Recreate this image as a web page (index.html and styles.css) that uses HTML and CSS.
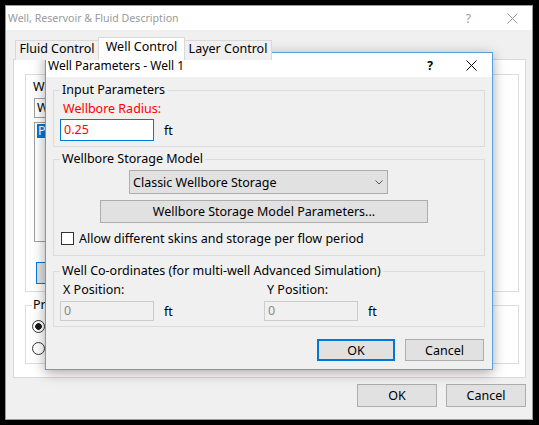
FILE: index.html
```html
<!DOCTYPE html>
<html lang="en">
<head>
<meta charset="utf-8">
<title>Well Parameters - Well 1</title>
<link rel="stylesheet" href="styles.css">
</head>
<body>
<div class="win">
  <div class="win-title">
    <span class="win-title-text">Well, Reservoir &amp; Fluid Description</span>
    <span class="win-help">?</span>
    <svg class="win-close" viewBox="0 0 11 11"><path d="M0.5 0.5L10.5 10.5M10.5 0.5L0.5 10.5"/></svg>
  </div>
  <div class="win-body">
    <div class="tabs">
      <div class="tab tab-first">Fluid Control</div>
      <div class="tab tab-active">Well Control</div>
      <div class="tab tab-last">Layer Control</div>
    </div>
    <div class="panel">
      <div class="wells-box">
        <div class="wells-label">W</div>
        <div class="wells-combo">W</div>
        <div class="wells-list"><div class="wells-item">P</div></div>
        <div class="wells-btn"></div>
      </div>
      <fieldset class="prod-box">
        <legend>Pr</legend>
        <div class="radio-row"><span class="radio radio-on"></span></div>
        <div class="radio-row"><span class="radio"></span></div>
      </fieldset>
    </div>
    <div class="win-actions">
      <div class="btn btn-main">OK</div>
      <div class="btn btn-main">Cancel</div>
    </div>
  </div>
</div>

<div class="dlg">
  <div class="dlg-title">
    <span class="dlg-title-text">Well Parameters - Well 1</span>
    <span class="dlg-help">?</span>
    <svg class="dlg-close" viewBox="0 0 11 11"><path d="M0.5 0.5L10.5 10.5M10.5 0.5L0.5 10.5"/></svg>
  </div>
  <div class="dlg-body">
    <fieldset class="grp grp-input">
      <legend>Input Parameters</legend>
      <div class="field-label red">Wellbore Radius:</div>
      <div class="input-row">
        <div class="textbox focus red">0.25</div>
        <span class="unit">ft</span>
      </div>
    </fieldset>
    <fieldset class="grp grp-storage">
      <legend>Wellbore Storage Model</legend>
      <div class="combo">
        <span>Classic Wellbore Storage</span>
        <svg class="chevron" viewBox="0 0 8 5"><path d="M0.5 0.5L4 4L7.5 0.5"/></svg>
      </div>
      <div class="btn btn-wide">Wellbore Storage Model Parameters...</div>
      <div class="check-row">
        <span class="checkbox"></span>
        <span>Allow different skins and storage per flow period</span>
      </div>
    </fieldset>
    <fieldset class="grp grp-coords">
      <legend>Well Co-ordinates (for multi-well Advanced Simulation)</legend>
      <div class="coords">
        <div class="coord">
          <div class="field-label">X Position:</div>
          <div class="input-row">
            <div class="textbox disabled">0</div>
            <span class="unit">ft</span>
          </div>
        </div>
        <div class="coord">
          <div class="field-label">Y Position:</div>
          <div class="input-row">
            <div class="textbox disabled">0</div>
            <span class="unit">ft</span>
          </div>
        </div>
      </div>
    </fieldset>
    <div class="dlg-actions">
      <div class="btn btn-default">OK</div>
      <div class="btn btn-cancel">Cancel</div>
    </div>
  </div>
</div>
</body>
</html>
```
FILE: styles.css
```css
* { box-sizing: border-box; }
html, body { margin: 0; padding: 0; }
body {
  width: 539px;
  height: 425px;
  overflow: hidden;
  background: #000;
  font-family: "Noto Sans", "Open Sans", "DejaVu Sans", sans-serif;
  font-size: 12.5px;
  color: #000;
  position: relative;
  padding: 5px 0 0 5px;
}

/* ---------- background window ---------- */
.win {
  width: 528px;
  height: 415px;
  border: 1px solid #9a9a9a;
  background: #f0f0f0;
  display: flex;
  flex-direction: column;
}
.win-title {
  height: 24px;
  flex: none;
  background: #fff;
  display: flex;
  align-items: center;
  padding-left: 2px;
  color: #9a9a9a;
}
.win-title-text { font-size: 10.6px; }
.win-help { margin-left: auto; margin-right: 36px; font-size: 12px; }
.win-close {
  width: 11px;
  height: 11px;
  margin-right: 14px;
  stroke: #9a9a9a;
  stroke-width: 1;
  fill: none;
}
.win-body {
  flex: 1;
  display: flex;
  flex-direction: column;
  padding: 7px 6px 0 7px;
}
.tabs {
  display: flex;
  align-items: flex-end;
  height: 23px;
  margin: 0 0 -1px 2px;
  position: relative;
  z-index: 1;
}
.tab {
  height: 20px;
  border: 1px solid #d9d9d9;
  border-bottom: none;
  background: #f0f0f0;
  text-align: center;
  line-height: 16px;
  white-space: nowrap;
}
.tab-first { width: 84px; }
.tab-active {
  width: 87px;
  height: 23px;
  background: #fff;
  margin-left: -1px;
  padding-top: 1px;
}
.tab-last { width: 88px; margin-left: -1px; }
.panel {
  height: 319px;
  border: 1px solid #d9d9d9;
  background: #fff;
  padding: 14px 6px 13px 11px;
}
.wells-box {
  height: 218px;
  border: 1px solid #dcdcdc;
  padding: 4px 0 0 8px;
}
.wells-label { line-height: 16px; margin-left: -1px; }
.wells-combo {
  margin-top: 3px;
  width: 180px;
  height: 20px;
  border: 1px solid #a0a0a0;
  background: #fff;
  padding-left: 2px;
  line-height: 18px;
}
.wells-list {
  margin-top: 4px;
  width: 180px;
  height: 120px;
  border: 1px solid #a0a0a0;
  background: #fff;
  padding: 1px 2px;
}
.wells-item {
  background: #0078d7;
  color: #fff;
  height: 14px;
  line-height: 14px;
  padding-left: 1px;
}
.wells-btn {
  margin: 20px 0 0 2px;
  width: 80px;
  height: 22px;
  border: 1px solid #0078d7;
  background: #e1e1e1;
}
.prod-box {
  margin: 5px 0 0;
  height: 67px;
  border: 1px solid #dcdcdc;
  padding: 0 6px;
  min-width: 0;
}
.prod-box legend { padding: 0 1px; line-height: 16px; }
.radio-row {
  height: 22px;
  display: flex;
  align-items: center;
}
.radio-row:first-of-type { margin-top: 2px; }
.radio {
  width: 13px;
  height: 13px;
  border: 1px solid #333;
  border-radius: 50%;
  background: #fff;
  flex: none;
}
.radio-on { background: radial-gradient(circle, #1a1a1a 0 3px, #fff 3.6px); }
.win-actions {
  display: flex;
  justify-content: flex-end;
  gap: 9px;
  margin-top: 6px;
}
.btn {
  background: #e1e1e1;
  border: 1px solid #adadad;
  display: flex;
  align-items: center;
  justify-content: center;
  white-space: nowrap;
}
.btn-main { width: 80px; height: 23px; }

/* ---------- modal dialog ---------- */
.dlg {
  position: absolute;
  left: 45px;
  top: 52px;
  width: 448px;
  height: 318px;
  border: 1px solid #5c9fe0;
  background: #f0f0f0;
  box-shadow: 0 3px 12px rgba(0, 0, 0, .35);
  display: flex;
  flex-direction: column;
}
.dlg-title {
  height: 24px;
  flex: none;
  background: #fff;
  display: flex;
  align-items: center;
  padding-left: 2px;
  font-size: 12px;
}
.dlg-help { margin-left: auto; margin-right: 33px; font-weight: 700; }
.dlg-close {
  width: 11px;
  height: 11px;
  margin-right: 15px;
  stroke: #000;
  stroke-width: 1;
  fill: none;
}
.dlg-body {
  flex: 1;
  display: flex;
  flex-direction: column;
  padding: 0 7px;
}
.grp {
  margin: 0;
  border: 1px solid #dcdcdc;
  padding: 0 6px;
  min-width: 0;
}
.grp legend { padding: 0 2px; line-height: 16px; }
.grp-input { margin-top: 5px; padding-bottom: 5px; }
.grp-storage { margin-top: 4px; padding-bottom: 9px; }
.grp-coords { margin-top: 7px; padding-bottom: 5px; }
.field-label { line-height: 16px; margin-top: 3px; padding-left: 3px; }
.red { color: #f00; }
.input-row {
  display: flex;
  align-items: center;
  margin-top: 2px;
}
.textbox {
  width: 94px;
  height: 22px;
  border: 1px solid #7a7a7a;
  background: #fff;
  padding: 0 3px;
  line-height: 20px;
}
.textbox.focus { border-color: #0078d7; }
.textbox.disabled {
  height: 20px;
  line-height: 18px;
  background: #f0f0f0;
  border-color: #cccccc;
  color: #8a8a8a;
}
.unit { margin-left: 10px; }
.combo {
  margin: 3px 0 0 69px;
  width: 259px;
  height: 24px;
  background: #e1e1e1;
  border: 1px solid #adadad;
  display: flex;
  align-items: center;
  justify-content: space-between;
  padding: 0 4px 0 3px;
}
.chevron {
  width: 8px;
  height: 5px;
  stroke: #555;
  stroke-width: 1;
  fill: none;
}
.btn-wide {
  margin: 6px 0 0 40px;
  width: 328px;
  height: 23px;
}
.check-row {
  margin-top: 7px;
  height: 16px;
  display: flex;
  align-items: center;
  gap: 5px;
}
.checkbox {
  width: 13px;
  height: 13px;
  border: 1px solid #333;
  background: #fff;
  margin-left: 1px;
  flex: none;
}
.coords {
  display: grid;
  grid-template-columns: 204px auto;
}
.coords .input-row { margin-top: 3px; }
.dlg-actions {
  display: flex;
  justify-content: flex-end;
  gap: 10px;
  margin: 12px 1px 0 0;
}
.dlg-actions .btn { height: 22px; }
.btn-default { width: 78px; border: 2px solid #0078d7; }
.btn-cancel { width: 79px; }
```
